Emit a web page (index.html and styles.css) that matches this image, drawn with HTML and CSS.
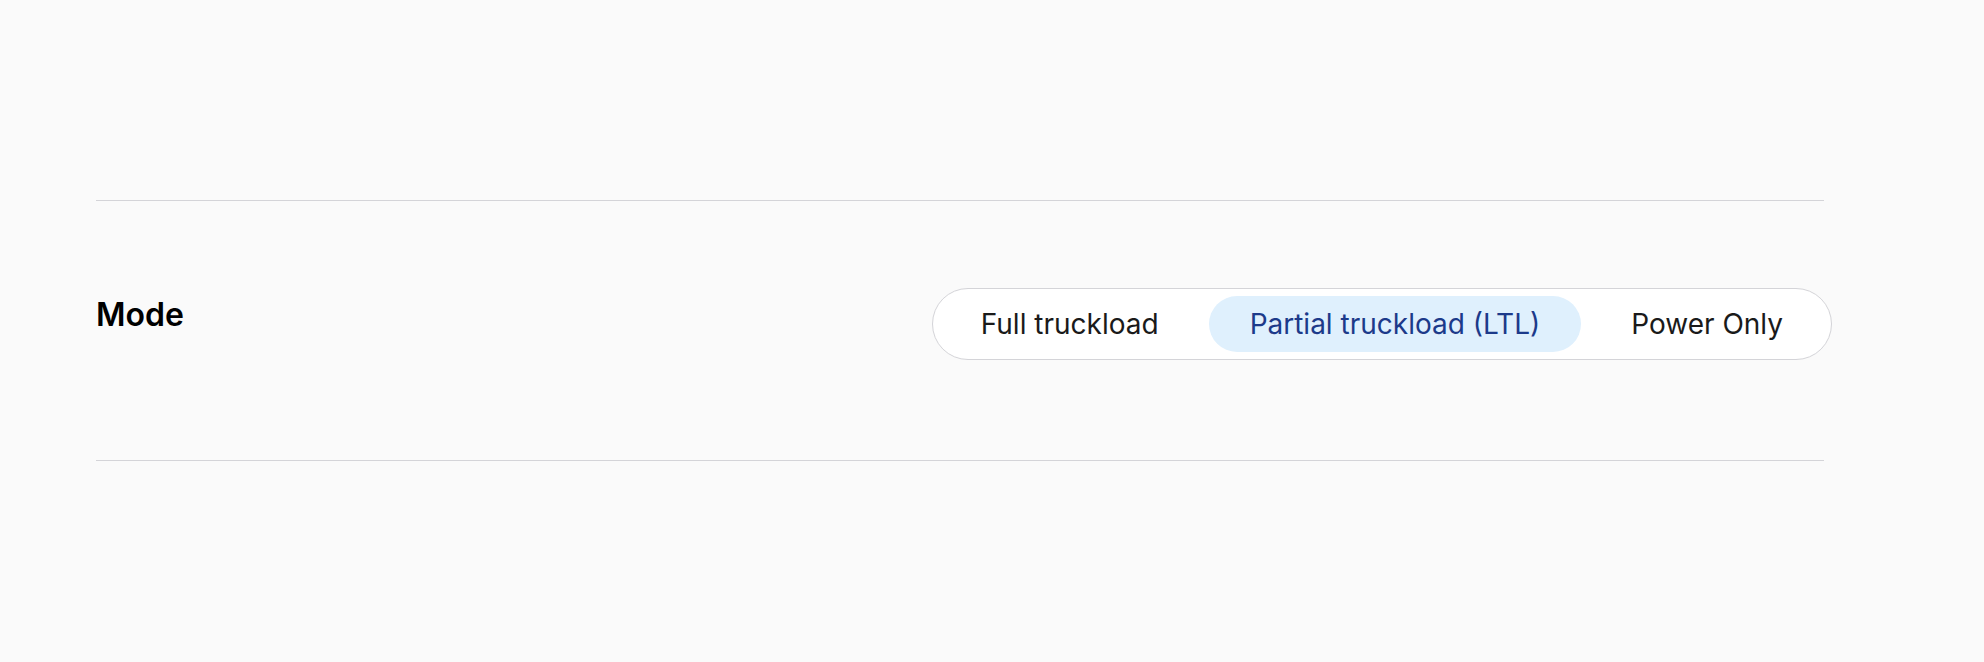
FILE: index.html
```html
<!DOCTYPE html>
<html>
<head>
    <meta charset="UTF-8">
    <title>Mode</title>
    <link rel="stylesheet" href="styles.css">
</head>
<body>
<div class="page">
    <div class="field">
        <h2 class="field-label">Mode</h2>
        <div class="segmented">
            <button class="seg">Full truckload</button>
            <button class="seg active">Partial truckload (LTL)</button>
            <button class="seg">Power Only</button>
        </div>
    </div>
</div>
</body>
</html>
```

FILE: styles.css
```css
body, div, h2, button {
    margin: 0;
    padding: 0;
    font-family: Inter, "Noto Sans", sans-serif;
}

body {
    background: #fafafa;
    color: #111;
}

.page {
    padding: 200px 160px 0 96px;
}

.field {
    display: flex;
    justify-content: space-between;
    align-items: flex-start;
    border-top: 1px solid #d4d4d8;
    border-bottom: 1px solid #d4d4d8;
    padding: 87px 0 100px;
}

.field-label {
    font-size: 32px;
    font-weight: 600;
    line-height: 40px;
    margin-top: 7px;
    color: #000;
}

.segmented {
    display: flex;
    gap: 9px;
    padding: 7px;
    margin-right: -8px;
    background: #fff;
    border: 1.5px solid #d4d4d8;
    border-radius: 40px;
}

.seg {
    height: 56px;
    padding: 0 41px;
    border: 0;
    border-radius: 28px;
    background: transparent;
    font-size: 28px;
    color: #1a1a1a;
    cursor: pointer;
}

.seg.active {
    background: #dff0fd;
    color: #1c3a8a;
}
```
